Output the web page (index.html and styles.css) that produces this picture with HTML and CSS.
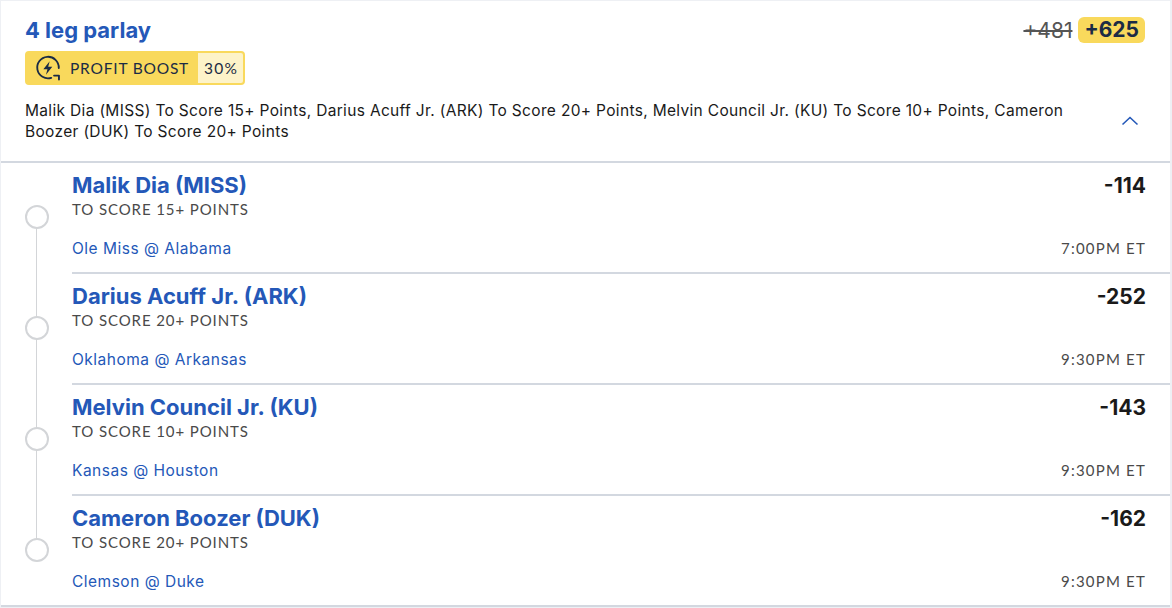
FILE: index.html
```html
<!DOCTYPE html>
<html lang="en">
  <head>
    <title>4 leg parlay</title>
    <link rel="stylesheet" href="styles.css">
  </head>

  <body>
    <div class="Card">
      <div class="Header">
        <div class="HeaderTop">
          <div>
            <h2 class="Title">4 leg parlay</h2>
            <div class="Boost">
              <span class="BoostLabel">
                <svg class="BoostIcon" viewBox="0 0 28 28" width="26" height="26" fill="none">
                  <path d="M17.5 24.6A11.6 11.6 0 1 1 25.6 14" stroke="#1b2b45" stroke-width="2" stroke-linecap="round"/>
                  <path d="M15.8 6.6 9 15.4h4.4l-1.6 6 6.8-8.8h-4.4z" fill="#1b2b45"/>
                  <path d="M20.5 22.2h5.3v4.3" stroke="#1b2b45" stroke-width="2" stroke-linecap="round" stroke-linejoin="round"/>
                </svg>
                PROFIT BOOST
              </span>
              <span class="BoostValue">30%</span>
            </div>
          </div>
          <div class="Odds">
            <span class="OldOdds">+481</span>
            <span class="NewOdds">+625</span>
          </div>
        </div>
        <div class="Summary">
          <p>Malik Dia (MISS) To Score 15+ Points, Darius Acuff Jr. (ARK) To Score 20+ Points, Melvin Council Jr. (KU) To Score 10+ Points, Cameron Boozer (DUK) To Score 20+ Points</p>
          <svg class="Chevron" viewBox="0 0 18 10" width="18" height="10" fill="none">
            <path d="M1.5 8.5 9 1.5l7.5 7" stroke="#2458b8" stroke-width="1.6"/>
          </svg>
        </div>
      </div>

      <div class="Leg">
        <div class="Rail"><span class="Dot"></span></div>
        <div class="LegBody">
          <div class="LegRow">
            <span class="Player">Malik Dia (MISS)</span>
            <span class="Price">-114</span>
          </div>
          <div class="Market">TO SCORE 15+ POINTS</div>
          <div class="LegRow LegBottom">
            <span class="Game">Ole Miss @ Alabama</span>
            <span class="Time">7:00PM ET</span>
          </div>
        </div>
      </div>

      <div class="Leg">
        <div class="Rail"><span class="Dot"></span></div>
        <div class="LegBody">
          <div class="LegRow">
            <span class="Player">Darius Acuff Jr. (ARK)</span>
            <span class="Price">-252</span>
          </div>
          <div class="Market">TO SCORE 20+ POINTS</div>
          <div class="LegRow LegBottom">
            <span class="Game">Oklahoma @ Arkansas</span>
            <span class="Time">9:30PM ET</span>
          </div>
        </div>
      </div>

      <div class="Leg">
        <div class="Rail"><span class="Dot"></span></div>
        <div class="LegBody">
          <div class="LegRow">
            <span class="Player">Melvin Council Jr. (KU)</span>
            <span class="Price">-143</span>
          </div>
          <div class="Market">TO SCORE 10+ POINTS</div>
          <div class="LegRow LegBottom">
            <span class="Game">Kansas @ Houston</span>
            <span class="Time">9:30PM ET</span>
          </div>
        </div>
      </div>

      <div class="Leg">
        <div class="Rail"><span class="Dot"></span></div>
        <div class="LegBody">
          <div class="LegRow">
            <span class="Player">Cameron Boozer (DUK)</span>
            <span class="Price">-162</span>
          </div>
          <div class="Market">TO SCORE 20+ POINTS</div>
          <div class="LegRow LegBottom">
            <span class="Game">Clemson @ Duke</span>
            <span class="Time">9:30PM ET</span>
          </div>
        </div>
      </div>
    </div>
  </body>
</html>
```

FILE: styles.css
```css
html,
body {
  height: 100%;
}

body {
  margin: 0;
  background-color: #eef0f4;
  font-family: "Inter", "Noto Sans", sans-serif;
  color: #1a1a1a;
  overflow: hidden;
}

.Card {
  margin: 1px 2px 0 1px;
  background-color: white;
  border-bottom: 2px solid #d3d8e0;
}

.Header {
  height: 162px;
  box-sizing: border-box;
  padding: 16px 25px 0 24px;
  border-bottom: 2px solid #d3d8e0;
}

.HeaderTop {
  display: flex;
  justify-content: space-between;
  align-items: flex-start;
}

.Title {
  margin: 0;
  font-size: 22px;
  line-height: 26px;
  font-weight: 700;
  color: #2458b8;
}

.Boost {
  margin-top: 8px;
  display: inline-flex;
  height: 34px;
  box-sizing: border-box;
  border: 2px solid #f9d95c;
  border-radius: 4px;
  background-color: #f9d95c;
  font-family: "Lato", sans-serif;
  font-size: 15.5px;
  letter-spacing: 0.8px;
  color: #1b2b45;
}

.BoostLabel {
  display: flex;
  align-items: center;
  gap: 9px;
  padding: 0 9px 0 8px;
}

.BoostValue {
  display: flex;
  align-items: center;
  padding: 0 5px 0 6px;
  background-color: #fdf3c9;
  border-radius: 0 2px 2px 0;
  letter-spacing: 1.2px;
}

.Odds {
  display: flex;
  align-items: center;
  gap: 6px;
  margin-top: 0;
}

.OldOdds {
  font-size: 21px;
  color: #555;
  text-decoration: line-through;
}

.NewOdds {
  padding: 0 6px;
  height: 26px;
  line-height: 25px;
  border-radius: 6px;
  background-color: #f9d95c;
  font-size: 21px;
  font-weight: 700;
  color: #1b2b45;
}

.Summary {
  margin-top: 15px;
  display: flex;
  justify-content: space-between;
  align-items: center;
}

.Summary p {
  margin: 0;
  width: 1050px;
  font-size: 15.5px;
  line-height: 21px;
  letter-spacing: 0.33px;
}

.Chevron {
  margin-right: 6px;
}

.Leg {
  display: flex;
  height: 111px;
}

.Leg:last-child {
  height: 109px;
}

.Rail {
  position: relative;
  width: 71px;
  flex-shrink: 0;
}

.Rail::before {
  content: "";
  position: absolute;
  left: 35px;
  top: 0;
  bottom: 0;
  width: 1px;
  background-color: #d3d5d8;
}

.Leg:nth-child(2) .Rail::before {
  top: 50%;
}

.Leg:last-child .Rail::before {
  bottom: 50%;
}

.Dot {
  position: absolute;
  left: 24px;
  top: 42px;
  width: 24px;
  height: 24px;
  box-sizing: border-box;
  border: 2px solid #d3d5d8;
  border-radius: 50%;
  background-color: white;
}

.LegBody {
  flex: 1;
  box-sizing: border-box;
  padding: 9px 24px 0 0;
  border-bottom: 2px solid #d3d8e0;
}

.Leg:last-child .LegBody {
  border-bottom: none;
}

.LegRow {
  display: flex;
  justify-content: space-between;
  align-items: flex-start;
}

.Player {
  font-size: 22px;
  line-height: 27px;
  font-weight: 700;
  color: #2458b8;
}

.Price {
  font-size: 21px;
  line-height: 27px;
  font-weight: 700;
  color: #1a1a1a;
}

.Market {
  margin-top: 1px;
  font-family: "Lato", sans-serif;
  font-size: 15px;
  line-height: 18px;
  letter-spacing: 0.9px;
  color: #4a4a4a;
}

.LegBottom {
  margin-top: 21px;
}

.Game {
  font-size: 15.5px;
  line-height: 20px;
  letter-spacing: 0.5px;
  color: #2458b8;
}

.Time {
  font-family: "Lato", sans-serif;
  font-size: 15px;
  line-height: 18px;
  letter-spacing: 1.2px;
  color: #4a4a4a;
}
```
